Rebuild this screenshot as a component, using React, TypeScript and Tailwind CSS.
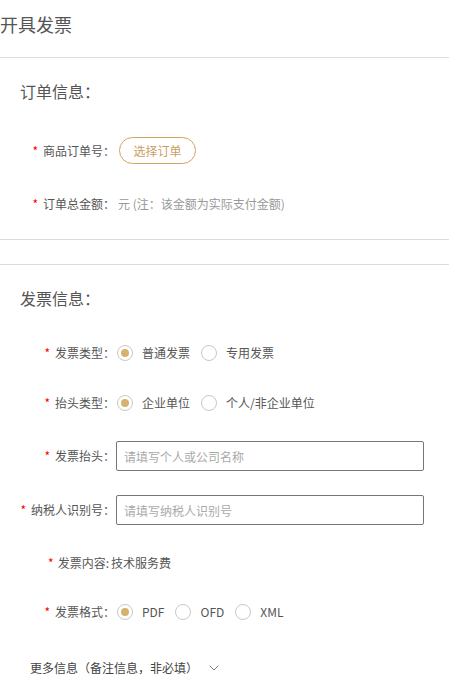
import { ChevronDown } from 'lucide-react'

const font = { fontFamily: '"Noto Sans CJK SC", "Noto Sans", sans-serif' }

function Label({ text }: { text: string }) {
  return (
    <div className="w-[115px] shrink-0 text-right text-[12px] leading-5 text-[#555]">
      <span className="mr-[5px] text-[#f00]">*</span>
      {text}
    </div>
  )
}

function Radio({ label, checked }: { label: string; checked?: boolean }) {
  return (
    <label className="mr-[11px] flex items-center">
      <span className="flex h-[16px] w-[16px] items-center justify-center rounded-full border border-[#c8c8c8] bg-white">
        {checked && <span className="h-[8px] w-[8px] rounded-full bg-[#d6b26d]" />}
      </span>
      <span className="ml-[9px] text-[12px] text-[#555]">{label}</span>
    </label>
  )
}

export default function App() {
  return (
    <div className="min-h-[700px] w-[449px] bg-white" style={font}>
      <header className="h-[58px] border-b border-[#dcdcdc] pt-[12px]">
        <h1 className="text-[18px] leading-6 text-[#555]">开具发票</h1>
      </header>

      {/* 订单信息 */}
      <section className="h-[182px] border-b border-[#dcdcdc] pt-[21px]">
        <h2 className="pl-[20px] text-[16px] leading-6 text-[#555]">订单信息：</h2>
        <div className="mt-[34px] flex h-[27px] items-center">
          <Label text="商品订单号：" />
          <button className="ml-[4px] h-[27px] w-[77px] rounded-full border border-[#d0a560] text-[12px] text-[#c9a063]">
            选择订单
          </button>
        </div>
        <div className="mt-[30px] flex h-5 items-center">
          <Label text="订单总金额：" />
          <span className="ml-[3px] text-[12px] text-[#999]">元 (注：该金额为实际支付金额)</span>
        </div>
      </section>

      <div className="h-[25px] border-b border-[#dcdcdc]" />

      {/* 发票信息 */}
      <section className="pt-[21px]">
        <h2 className="pl-[20px] text-[16px] leading-6 text-[#555]">发票信息：</h2>
        <div className="mt-[33px] flex h-5 items-center">
          <Label text="发票类型：" />
          <div className="ml-[2px] flex">
            <Radio label="普通发票" checked />
            <Radio label="专用发票" />
          </div>
        </div>
        <div className="mt-[30px] flex h-5 items-center">
          <Label text="抬头类型：" />
          <div className="ml-[2px] flex">
            <Radio label="企业单位" checked />
            <Radio label="个人/非企业单位" />
          </div>
        </div>
        <div className="mt-[28px] flex h-[30px] items-center">
          <Label text="发票抬头：" />
          <input
            className="ml-[1px] h-[30px] w-[308px] rounded-[2px] border border-[#767676] px-[7px] text-[12px] text-[#555] outline-none placeholder:text-[#aaa]"
            placeholder="请填写个人或公司名称"
          />
        </div>
        <div className="mt-[24px] flex h-[30px] items-center">
          <Label text="纳税人识别号：" />
          <input
            className="ml-[1px] h-[30px] w-[308px] rounded-[2px] border border-[#767676] px-[7px] text-[12px] text-[#555] outline-none placeholder:text-[#aaa]"
            placeholder="请填写纳税人识别号"
          />
        </div>
        <div className="mt-[28px] flex h-5 items-center">
          <div className="w-[109px] shrink-0 text-right text-[12px] leading-5 text-[#555]">
            <span className="mr-[4px] text-[#f00]">*</span>
            发票内容:
          </div>
          <span className="ml-[2px] text-[12px] text-[#555]">技术服务费</span>
        </div>
        <div className="mt-[29px] flex h-5 items-center">
          <Label text="发票格式：" />
          <div className="ml-[2px] flex">
            <Radio label="PDF" checked />
            <Radio label="OFD" />
            <Radio label="XML" />
          </div>
        </div>
        <div className="mt-[36px] flex h-5 items-center pl-[30px] text-[12px] text-[#444]">
          更多信息（备注信息，非必填）
          <ChevronDown className="ml-[8px] h-[16px] w-[16px] text-[#666]" strokeWidth={1.25} />
        </div>
      </section>
    </div>
  )
}
